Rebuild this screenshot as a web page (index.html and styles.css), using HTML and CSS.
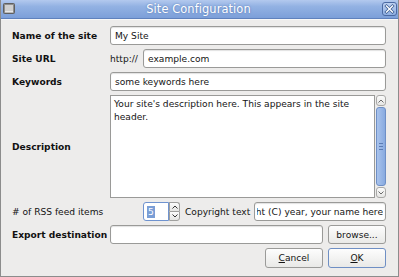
FILE: index.html
```html
<!DOCTYPE html>
<html>
<head>
<meta charset="utf-8">
<link rel="stylesheet" href="styles.css">
</head>
<body>
<div class="window">
  <div class="titlebar">
    <svg class="winicon" width="12" height="12" viewBox="0 0 12 12">
      <rect x="0.5" y="0.5" width="11" height="10" rx="1" fill="#8d8d8d" stroke="#5f5f5f"/>
      <rect x="2" y="2" width="8" height="6" fill="#cfcfcf"/>
      <rect x="2" y="8" width="8" height="1.5" fill="#e8e8e8"/>
    </svg>
    <div class="title">Site Configuration</div>
    <div class="closebtn">
      <svg width="13" height="12" viewBox="0 0 13 12">
        <path d="M3.5 3 L9.5 9 M9.5 3 L3.5 9" stroke="#3e5f95" stroke-width="3" stroke-linecap="square"/>
        <path d="M3.5 3 L9.5 9 M9.5 3 L3.5 9" stroke="#ffffff" stroke-width="1.4" stroke-linecap="square"/>
      </svg>
    </div>
  </div>
  <div class="content">
    <div class="label bold">Name of the site</div>
    <div class="field span2"><span>My Site</span></div>

    <div class="label bold">Site URL</div>
    <div class="prefix">http://</div>
    <div class="field"><span>example.com</span></div>

    <div class="label bold">Keywords</div>
    <div class="field span2"><span>some keywords here</span></div>

    <div class="label bold">Description</div>
    <div class="textwrap span2">
      <div class="textarea">Your site's description here. This appears in the site header.</div>
      <div class="scrollbar">
        <div class="sbtn up">
          <svg width="8" height="6" viewBox="0 0 8 6"><path d="M1.5 4.5 L4 2 L6.5 4.5" fill="none" stroke="#6b6b6b" stroke-width="1"/></svg>
        </div>
        <div class="thumb"><div class="grip"></div></div>
        <div class="sbtn down">
          <svg width="8" height="6" viewBox="0 0 8 6"><path d="M1.5 1.5 L4 4 L6.5 1.5" fill="none" stroke="#6b6b6b" stroke-width="1"/></svg>
        </div>
      </div>
    </div>

    <div class="label">#&nbsp;of RSS feed items</div>
    <div class="rssrow span2">
      <div class="spin">
        <div class="spinfield"><span class="sel">5</span></div>
        <div class="spinbtns">
          <div class="sb">
            <svg width="8" height="6" viewBox="0 0 8 6"><path d="M1.5 4.5 L4 2 L6.5 4.5" fill="none" stroke="#333" stroke-width="1"/></svg>
          </div>
          <div class="sb">
            <svg width="8" height="6" viewBox="0 0 8 6"><path d="M1.5 1.5 L4 4 L6.5 1.5" fill="none" stroke="#333" stroke-width="1"/></svg>
          </div>
        </div>
      </div>
      <div class="copylabel">Copyright text</div>
      <input class="copy" type="text" dir="rtl" value="Copyright (C) year, your name here">
    </div>

    <div class="label bold">Export destination</div>
    <div class="exportrow span2">
      <div class="field grow"></div>
      <div class="button">browse...</div>
    </div>

    <div class="actions">
      <div class="button"><span><u>C</u>ancel</span></div>
      <div class="button default"><span><u>O</u>K</span></div>
    </div>
  </div>
</div>
</body>
</html>
```

FILE: styles.css
```css
html, body {
  margin: 0;
  padding: 0;
  background: #edeceb;
}

.window {
  width: 399px;
  height: 277px;
  box-sizing: border-box;
  border: 1px solid #8c8c8c;
  border-top: none;
  background: #edeceb;
  font-family: "DejaVu Sans", "Liberation Sans", sans-serif;
  font-size: 9.1px;
  color: #141414;
  display: flex;
  flex-direction: column;
  overflow: hidden;
}

.titlebar {
  height: 19px;
  flex: none;
  box-sizing: border-box;
  background: linear-gradient(#b3c9ee 0%, #93b2e3 35%, #7c9fd9 100%);
  border-bottom: 1px solid #5f81bd;
  display: flex;
  align-items: center;
  padding: 0 2px 0 3px;
  margin: 0 -1px;
}

.winicon {
  flex: none;
}

.title {
  flex: 1;
  text-align: center;
  color: #ffffff;
  font-size: 11.4px;
  text-shadow: 0 0 2px #4f72ad;
  letter-spacing: 0.1px;
}

.closebtn {
  width: 15px;
  height: 14px;
  box-sizing: border-box;
  border: 1px solid #4b6aa3;
  border-radius: 3px;
  background: linear-gradient(#bcd0f0, #8fafe2);
  display: flex;
  align-items: center;
  justify-content: center;
}

.content {
  flex: 1;
  display: grid;
  grid-template-columns: 99px 33px 1fr;
  grid-template-rows: 19px 19px 19px 103px 19px 19px 20px;
  row-gap: 4px;
  padding: 6px 12px 0 10px;
  border-top: 1px solid #f7f7f7;
}

.span2 {
  grid-column: 2 / 4;
}

.label {
  display: flex;
  align-items: center;
  white-space: nowrap;
  color: #111;
  padding-left: 1px;
}

.bold {
  font-weight: bold;
}

.prefix {
  display: flex;
  align-items: center;
}

.field {
  box-sizing: border-box;
  height: 19px;
  border: 1px solid #9a9a98;
  border-radius: 3px;
  background: #ffffff;
  box-shadow: inset 0 1px 1px rgba(0,0,0,0.12);
  display: flex;
  align-items: center;
  padding: 0 4px;
  white-space: nowrap;
  overflow: hidden;
}

.textwrap {
  display: flex;
  gap: 1px;
}

.textarea {
  flex: 1;
  box-sizing: border-box;
  border: 1px solid #9a9a98;
  background: #ffffff;
  padding: 2px 3px;
  line-height: 13px;
}

.scrollbar {
  width: 10px;
  flex: none;
  display: flex;
  flex-direction: column;
  gap: 1px;
}

.sbtn {
  height: 11px;
  box-sizing: border-box;
  border: 1px solid #a9a9a7;
  border-radius: 3px;
  background: linear-gradient(#fbfbfb, #e6e6e4);
  display: flex;
  align-items: center;
  justify-content: center;
}

.thumb {
  flex: 1;
  box-sizing: border-box;
  border: 1px solid #6e8fc6;
  border-radius: 3px;
  background: linear-gradient(90deg, #a9c3ec, #88aae0);
  display: flex;
  align-items: center;
  justify-content: center;
}

.grip {
  width: 4px;
  height: 5px;
  border-top: 1px solid #5b7cb4;
  border-bottom: 1px solid #5b7cb4;
}

.grip::after {
  content: "";
  display: block;
  border-top: 1px solid #5b7cb4;
  margin-top: 2px;
}

.rssrow {
  display: flex;
  align-items: center;
}

.spin {
  margin-left: 33px;
  display: flex;
  height: 19px;
}

.spinfield {
  width: 26px;
  box-sizing: border-box;
  border: 1px solid #6f93cf;
  border-radius: 3px 0 0 3px;
  background: #ffffff;
  display: flex;
  align-items: center;
  padding-left: 3px;
}

.sel {
  background: #7a9ed6;
  color: #ffffff;
  padding: 0 1px;
  line-height: 12px;
}

.spinbtns {
  width: 11px;
  display: flex;
  flex-direction: column;
}

.sb {
  flex: 1;
  box-sizing: border-box;
  border: 1px solid #a0a09e;
  background: linear-gradient(#fbfbfb, #e4e4e2);
  display: flex;
  align-items: center;
  justify-content: center;
}

.sb:first-child {
  border-radius: 0 3px 0 0;
  border-bottom: none;
}

.sb:last-child {
  border-radius: 0 0 3px 0;
}

.copylabel {
  margin-left: 5px;
  white-space: nowrap;
}

.copy {
  flex: 1;
  min-width: 0;
  margin: 0 0 0 4px;
  box-sizing: border-box;
  height: 19px;
  border: 1px solid #9a9a98;
  border-radius: 3px;
  background: #ffffff;
  box-shadow: inset 0 1px 1px rgba(0,0,0,0.12);
  padding: 0 2px;
  font-family: inherit;
  font-size: inherit;
  color: inherit;
  outline: none;
}

.exportrow {
  display: flex;
  gap: 5px;
}

.grow {
  flex: 1;
}

.button {
  box-sizing: border-box;
  width: 58px;
  height: 19px;
  border: 1px solid #9b9b99;
  border-radius: 3px;
  background: linear-gradient(#fdfdfd, #e9e9e7);
  display: flex;
  align-items: center;
  justify-content: center;
  flex: none;
}

.actions {
  grid-column: 1 / 4;
  display: flex;
  justify-content: flex-end;
  gap: 5px;
}

.actions .button {
  height: 20px;
}

.button.default {
  border-color: #6f8fc4;
}

u {
  text-decoration: underline;
  text-underline-offset: 1px;
}
```
